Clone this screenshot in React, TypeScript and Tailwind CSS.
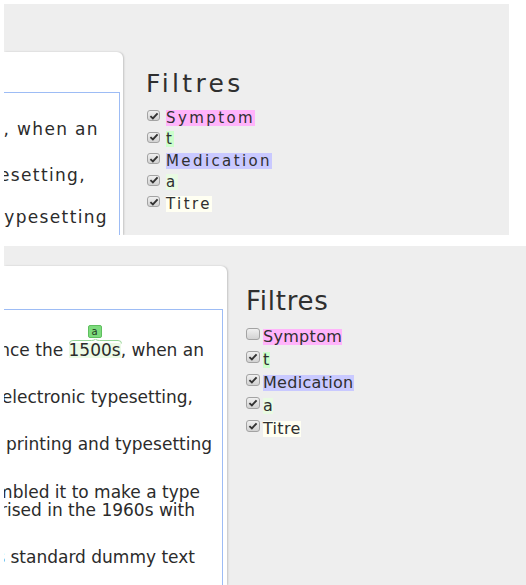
import clsx from "clsx"

type Filter = { label: string; bg: string; checked: boolean }

const topFilters: Filter[] = [
  { label: "Symptom", bg: "bg-[#ffb4fb]", checked: true },
  { label: "t", bg: "bg-[#ccffcc]", checked: true },
  { label: "Medication", bg: "bg-[#c9c9ff]", checked: true },
  { label: "a", bg: "bg-[#e9fbe3]", checked: true },
  { label: "Titre", bg: "bg-[#fffff2]", checked: true },
]

const bottomFilters: Filter[] = topFilters.map((f, i) => (i === 0 ? { ...f, checked: false } : f))

function CheckBox({ checked, small }: { checked: boolean; small?: boolean }) {
  return (
    <span
      className={clsx(
        "inline-flex shrink-0 items-center justify-center rounded-[3px] border border-[#a3a3a3] bg-gradient-to-b from-[#f0f0f0] to-[#d2d2d2]",
        small ? "w-[13px] h-[11px] mb-[4px]" : "w-[14px] h-[12px] mb-[5px]"
      )}
    >
      {checked && (
        <svg viewBox="0 0 12 10" className="w-[10px] h-[8px]">
          <path d="M1.5 5.2 L4.6 8 L10.5 1.6" fill="none" stroke="#333" strokeWidth="2.4" />
        </svg>
      )}
    </span>
  )
}

function Filters({ items, small }: { items: Filter[]; small?: boolean }) {
  return (
    <div className="flex flex-col text-[#2f2f2f]" style={{ fontFamily: "'DejaVu Sans', sans-serif" }}>
      <h2
        className={clsx(
          "leading-none font-normal",
          small ? "text-[25px] tracking-[3.3px]" : "text-[26px] tracking-[0.75px]"
        )}
      >
        Filtres
      </h2>
      <ul className="flex flex-col mt-[11px]">
        {items.map((f) => (
          <li key={f.label} className={clsx("flex items-center", small ? "h-[21.5px] pl-[1px] gap-[6px]" : "h-[23px] gap-[3px]")}>
            <CheckBox checked={f.checked} small={small} />
            <span
              className={clsx(
                "inline-block",
                f.bg,
                small ? "text-[15px] leading-[16px] tracking-[2.4px]" : "text-[16px] leading-[16px] tracking-[0.3px]"
              )}
            >
              {f.label}
            </span>
          </li>
        ))}
      </ul>
    </div>
  )
}

function Line({ pr, mt, children }: { pr: string; mt: string; children: React.ReactNode }) {
  return (
    <div className={clsx("flex justify-end whitespace-nowrap", pr, mt)}>
      <span className="shrink-0">{children}</span>
    </div>
  )
}

export default function App() {
  return (
    <div className="w-[526px] h-[585px] overflow-hidden bg-white pt-[4px] pl-[4px]">
      {/* first capture */}
      <div className="flex w-[505px] h-[231px] bg-[#eeeeee] overflow-hidden">
        <div className="w-[119px] shrink-0 mt-[48px] bg-white rounded-tr-[6px] shadow-[1px_0_2px_rgba(0,0,0,0.18)] overflow-hidden pt-[40px] pr-[3px]">
          <div
            className="h-full border-t border-r border-[#9dbcf5] pt-[26px] text-[17px] leading-[20px] tracking-[1.35px] text-[#2b2b2b]"
            style={{ fontFamily: "'DejaVu Sans', sans-serif" }}
          >
            <Line pr="pr-[20px]" mt="mt-0">text ever since the 1500s, when an</Line>
            <Line pr="pr-[33px]" mt="mt-[26px]">into electronic typesetting,</Line>
            <Line pr="pr-[11px]" mt="mt-[22px]">text of the printing and typesetting</Line>
          </div>
        </div>
        <div className="ml-[23px] pt-[67px]">
          <Filters items={topFilters} small />
        </div>
      </div>

      {/* second capture */}
      <div className="flex mt-[11px] w-[522px] h-[339px] bg-[#eeeeee] overflow-hidden">
        <div className="w-[223px] shrink-0 mt-[20px] bg-white rounded-tr-[6px] shadow-[1px_0_2px_rgba(0,0,0,0.18)] overflow-hidden pt-[43px] pr-[4px]">
          <div
            className="h-full border-t border-r border-[#9dbcf5] pt-[31px] text-[17px] leading-[18px] text-[#2b2b2b]"
            style={{ fontFamily: "'DejaVu Sans', sans-serif" }}
          >
            <Line pr="pr-[18px]" mt="mt-0">
              text ever since the{" "}
              <span className="relative inline-block h-[15px] leading-[15px] bg-[#ecfae6]">
                1500s
                <span className="absolute left-1/2 -translate-x-1/2 top-[-18px] flex flex-col items-center">
                  <span className="w-[14px] h-[13px] rounded-[2px] border border-[#5fbf5f] bg-[#7ddb7d] text-[10px] leading-[11px] text-center text-[#1f3b1f]">
                    a
                  </span>
                </span>
                <svg viewBox="0 0 54 5" className="absolute left-0 top-[-4px] w-[53px] h-[5px]">
                  <path
                    d="M0.5 4.5 Q0.5 1.5 4 1.5 L23 1.5 Q26 1.5 27 0 Q28 1.5 31 1.5 L50 1.5 Q53.5 1.5 53.5 4.5"
                    fill="none"
                    stroke="#93d393"
                    strokeWidth="1"
                  />
                </svg>
              </span>
              , when an
            </Line>
            <Line pr="pr-[29px]" mt="mt-[29px]">into electronic typesetting,</Line>
            <Line pr="pr-[10px]" mt="mt-[29px]">text of the printing and typesetting</Line>
            <Line pr="pr-[22px]" mt="mt-[30px]">and scrambled it to make a type</Line>
            <Line pr="pr-[27px]" mt="mt-0">was popularised in the 1960s with</Line>
            <Line pr="pr-[27px]" mt="mt-[29px]">the industry's standard dummy text</Line>
          </div>
        </div>
        <div className="ml-[19px] pt-[42px]">
          <Filters items={bottomFilters} />
        </div>
      </div>
    </div>
  )
}
